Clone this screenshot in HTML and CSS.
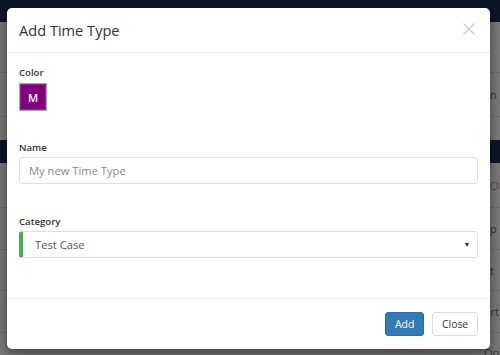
FILE: index.html
```html
<!DOCTYPE html>
<html lang="en">
<head>
<meta charset="utf-8">
<title>Add Time Type</title>
<link rel="stylesheet" href="styles.css">
</head>
<body>
<div class="page">
  <div class="bg-nav"></div>
  <div class="bg-row h50"></div>
  <div class="bg-row h44"><span class="bg-text">n</span></div>
  <div class="bg-row h23 noline"></div>
  <div class="bg-nav h23"></div>
  <div class="bg-row h45"><span class="bg-text light">OF</span></div>
  <div class="bg-row h42"><span class="bg-text">p</span></div>
  <div class="bg-row h40"><span class="bg-text">t</span></div>
  <div class="bg-row h42"><span class="bg-text shift">ort</span></div>
  <div class="bg-row last noline"><span class="bg-text shift">Opportu</span></div>
</div>

<div class="modal" role="dialog" aria-labelledby="modal-title">
  <div class="modal-header">
    <h4 class="modal-title" id="modal-title">Add Time Type</h4>
    <button class="modal-close" type="button" aria-label="Close">
      <svg width="12" height="12" viewBox="0 0 12 12" aria-hidden="true">
        <path d="M0.5 0.5 L11.5 11.5 M11.5 0.5 L0.5 11.5" stroke="#c9c9c9" stroke-width="1.2" fill="none"/>
      </svg>
    </button>
  </div>
  <div class="modal-body">
    <div class="field">
      <label class="field-label">Color</label>
      <div class="swatch">M</div>
    </div>
    <div class="field gap">
      <label class="field-label" for="name">Name</label>
      <input class="text-input" id="name" type="text" placeholder="My new Time Type">
    </div>
    <div class="field gap2">
      <label class="field-label" for="category">Category</label>
      <div class="select-wrap">
        <select class="select-input" id="category">
          <option>Test Case</option>
        </select>
      </div>
    </div>
  </div>
  <div class="modal-footer">
    <button class="btn btn-primary" type="button">Add</button>
    <button class="btn btn-default" type="button">Close</button>
  </div>
</div>
</body>
</html>
```

FILE: styles.css
```css
html, body {
  margin: 0;
  padding: 0;
}

body {
  width: 500px;
  height: 355px;
  overflow: hidden;
  position: relative;
  background: #7a7a7a;
  font-family: "Open Sans", "Liberation Sans", sans-serif;
  color: #333;
}

.page {
  height: 355px;
  overflow: hidden;
  display: flex;
  flex-direction: column;
}

.bg-nav {
  flex: none;
  height: 22px;
  background: #0c1626;
}

.bg-nav.h23 { height: 23px; }

.bg-row {
  flex: none;
  box-sizing: border-box;
  background: #7a7a7a;
  border-bottom: 1px solid #6c6c6c;
  padding-left: 490px;
  display: flex;
  align-items: center;
  white-space: nowrap;
  overflow: hidden;
  font-size: 11px;
  color: #333;
}

.bg-row.noline { border-bottom: none; }
.h50 { height: 51px; }
.h44 { height: 44px; }
.h23 { height: 23px; }
.h45 { height: 45px; }
.h42 { height: 42px; }
.h40 { height: 41px; }
.bg-row.last {
  flex: 1;
  min-height: 0;
  align-items: flex-start;
  padding-top: 12px;
}

.bg-text.light { color: #4a4a4a; }
.bg-text.shift { margin-left: -6px; }

.modal {
  position: absolute;
  left: 7px;
  top: 8px;
  width: 483px;
  height: 341px;
  box-sizing: border-box;
  background: #fff;
  border-radius: 5px;
  box-shadow: 0 4px 12px rgba(0, 0, 0, 0.5);
  display: flex;
  flex-direction: column;
  overflow: hidden;
}

.modal-header {
  height: 45px;
  box-sizing: border-box;
  border-bottom: 1px solid #ececec;
  padding: 0 12px;
  display: flex;
  align-items: center;
  justify-content: space-between;
}

.modal-title {
  margin: 0;
  font-size: 14.6px;
  font-weight: 400;
  color: #333;
}

.modal-close {
  border: none;
  background: none;
  padding: 0;
  margin-right: 3px;
  margin-top: -3px;
  width: 12px;
  height: 12px;
  display: flex;
}

.modal-body {
  flex: 1;
  padding: 11px 12px 0;
  display: flex;
  flex-direction: column;
}

.field {
  display: flex;
  flex-direction: column;
  align-items: flex-start;
}

.field.gap { margin-top: 28px; }
.field.gap2 { margin-top: 29px; }

.field-label {
  font-size: 9.6px;
  font-weight: 600;
  line-height: 17px;
  color: #333;
  margin-bottom: 1px;
}

.swatch {
  margin-top: 1px;
  width: 28px;
  height: 28px;
  box-sizing: border-box;
  background: #800080;
  border: 1px solid #a6a6a6;
  box-shadow: inset 0 0 0 1px #8c2a8c;
  color: #fff;
  font-size: 11px;
  font-weight: 600;
  display: flex;
  align-items: center;
  justify-content: center;
}

.text-input {
  box-sizing: border-box;
  width: 100%;
  height: 27px;
  margin: 0;
  border: 1px solid #e0e0e0;
  border-radius: 3px;
  padding: 0 9px;
  font-family: inherit;
  font-size: 11.2px;
  color: #555;
  background: #fff;
  outline: none;
}

.text-input::placeholder {
  color: #8a8a8a;
}

.select-wrap {
  position: relative;
  width: 100%;
}

.select-wrap::after {
  content: "";
  position: absolute;
  right: 9px;
  top: 12px;
  border-left: 2.5px solid transparent;
  border-right: 2.5px solid transparent;
  border-top: 4px solid #333;
}

.select-input {
  appearance: none;
  -webkit-appearance: none;
  box-sizing: border-box;
  width: 100%;
  height: 27px;
  margin: 0;
  border: 1px solid #e0e0e0;
  border-left: 4px solid #44b24c;
  border-radius: 3px;
  padding: 0 12px;
  font-family: inherit;
  font-size: 11.2px;
  color: #555;
  background: #fff;
  outline: none;
}

.modal-footer {
  height: 51px;
  box-sizing: border-box;
  border-top: 1px solid #ececec;
  padding: 0 12px 0;
  display: flex;
  align-items: center;
  justify-content: flex-end;
  gap: 8px;
}

.btn {
  height: 24px;
  box-sizing: border-box;
  border-radius: 3px;
  font-family: inherit;
  font-size: 10.4px;
  padding: 0 9px;
  border: 1px solid transparent;
}

.btn-primary {
  background: #337ab7;
  border-color: #2e6da4;
  color: #fff;
  width: 39px;
}

.btn-default {
  background: #fff;
  border-color: #dcdcdc;
  color: #333;
  width: 46px;
}
```
